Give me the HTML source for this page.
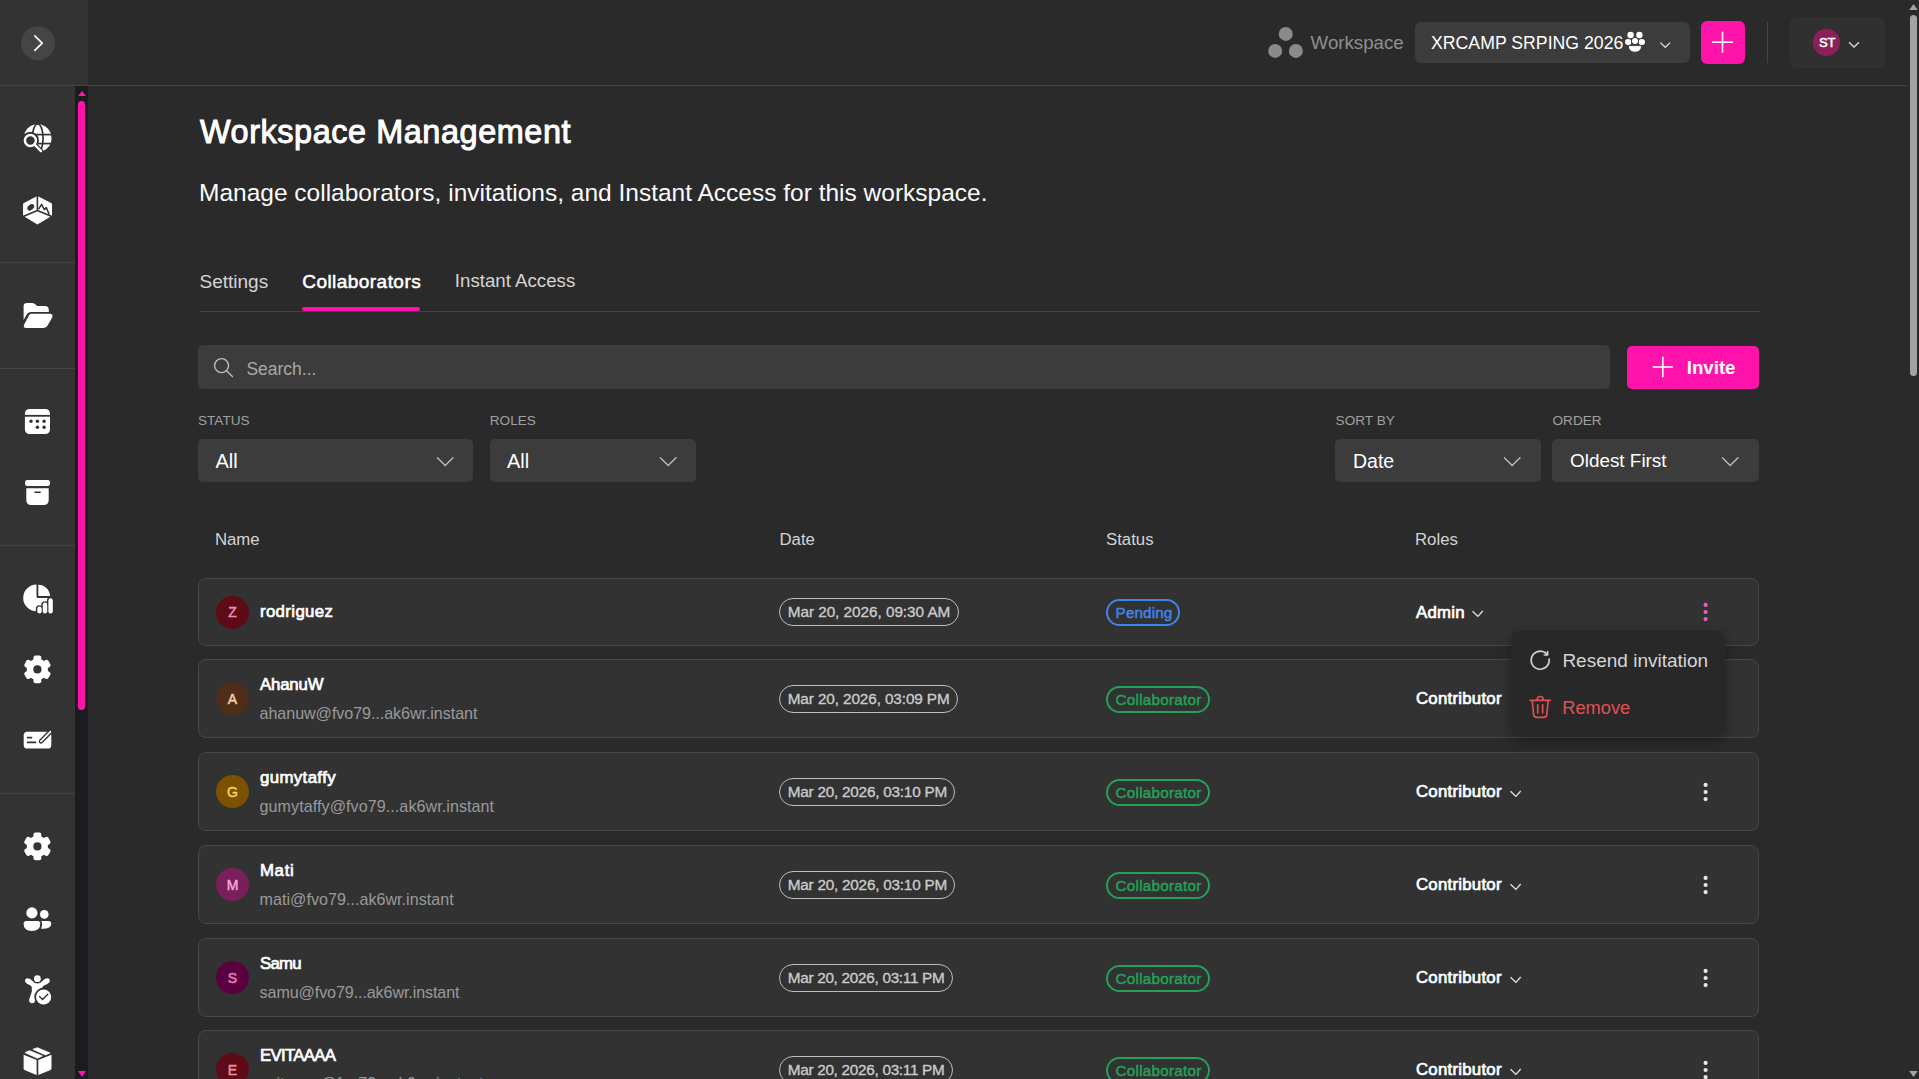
<!DOCTYPE html>
<html><head><meta charset="utf-8"><title>Workspace Management</title>
<style>
html,body{margin:0;padding:0}
body{width:1919px;height:1079px;overflow:hidden;background:#2a2a2a;font-family:"Liberation Sans",sans-serif;position:relative}
.a{position:absolute}
.t{position:absolute;white-space:nowrap;line-height:1}
svg.a{overflow:visible}
</style></head><body>
<div class="a" style="left:0px;top:0px;width:88px;height:85px;background:#333333;"></div>
<div class="a" style="left:0px;top:85px;width:1907px;height:1px;background:#444444;"></div>
<div class="a" style="left:0px;top:86px;width:75px;height:993px;background:#333333;"></div>
<div class="a" style="left:75px;top:86px;width:13px;height:993px;background:#1b1c20;"></div>
<div class="a" style="left:0px;top:262px;width:75px;height:1px;background:#444444;"></div>
<div class="a" style="left:0px;top:368px;width:75px;height:1px;background:#444444;"></div>
<div class="a" style="left:0px;top:545px;width:75px;height:1px;background:#444444;"></div>
<div class="a" style="left:0px;top:793px;width:75px;height:1px;background:#444444;"></div>
<div class="a" style="left:78px;top:101px;width:7px;height:609px;background:#ff14ab;border-radius:3.5px"></div>
<svg class="a" style="left:75px;top:86px;" width="13" height="993" viewBox="0 0 13 993"><polygon points="3,10 7,5 11,10" fill="#ff14ab"/><polygon points="3,985 11,985 7,991" fill="#ff14ab"/></svg>
<svg class="a" style="left:1907px;top:0px;" width="12" height="1079" viewBox="0 0 12 1079"><polygon points="2.2,10 6.5,4 10.8,10" fill="#a3a3a3"/><rect x="3" y="15" width="7" height="361" rx="3.5" fill="#a3a3a3"/><polygon points="2.2,1071 10.8,1071 6.5,1077" fill="#a3a3a3"/></svg>
<svg class="a" style="left:0px;top:0px;" width="88" height="85" viewBox="0 0 88 85"><circle cx="38.1" cy="43.3" r="17" fill="#454545"/><polyline points="34.8,35.8 42.2,43.2 34.8,50.4" fill="none" stroke="#fff" stroke-width="1.7" stroke-linecap="round" stroke-linejoin="round"/></svg>
<svg class="a" style="left:18px;top:118px;" width="40" height="40" viewBox="0 0 40 40"><circle cx="19.6" cy="20.2" r="13.9" fill="#ffffff"/><line x1="4" y1="16.6" x2="36" y2="16.6" stroke="#333333" stroke-width="1.7"/><line x1="4" y1="25.6" x2="36" y2="25.6" stroke="#333333" stroke-width="1.7"/><ellipse cx="19.7" cy="20.2" rx="5.4" ry="14.2" fill="none" stroke="#333333" stroke-width="1.7"/><polygon points="0,26 17.4,26 24.5,33.6 24.5,40 0,40" fill="#333333"/><circle cx="12.4" cy="22.4" r="8.6" fill="#333333"/><line x1="17.4" y1="27.4" x2="23.2" y2="33.4" stroke="#333333" stroke-width="5" stroke-linecap="round"/><circle cx="12.4" cy="22.4" r="5.5" fill="none" stroke="#ffffff" stroke-width="2.5"/><line x1="16.8" y1="26.8" x2="23" y2="33.2" stroke="#ffffff" stroke-width="2.4" stroke-linecap="round"/></svg>
<svg class="a" style="left:18px;top:190px;" width="40" height="40" viewBox="0 0 40 40"><polygon points="19.4,6.5 33.5,13.7 33.5,25.6 19.4,34 5.6,25.6 5.6,13.7" fill="#ffffff" stroke="#ffffff" stroke-width="1" stroke-linejoin="round"/><polyline points="19.4,5 19.4,20.4 4,27" fill="none" stroke="#333333" stroke-width="1.6"/><line x1="19.4" y1="20.4" x2="35" y2="27" stroke="#333333" stroke-width="1.6"/><ellipse cx="12.8" cy="17.3" rx="3.9" ry="2.6" transform="rotate(-40 12.8 17.3)" fill="#333333"/><polyline points="20.6,19.2 23.6,14.3 26.3,19.6 28.3,17.6 31.3,24.6" fill="none" stroke="#333333" stroke-width="1.5" stroke-linejoin="round"/></svg>
<svg class="a" style="left:18px;top:296px;" width="40" height="40" viewBox="0 0 40 40"><path d="M5.6,10.2 Q5.6,6.9 9,6.9 H14.2 Q16.3,6.9 17.6,8.4 L19,10 H27 Q30.8,10 30.8,14 V15.9 H13.2 Q10,15.9 8.4,18.9 L5.6,24 Z" fill="#ffffff"/><path d="M13.4,17.8 H31.6 Q35.6,17.9 34.2,21.6 L29.6,29.6 Q28.3,31.9 25.6,31.9 H8.6 Q4.6,31.9 6.2,28.4 L10.6,20 Q11.7,17.8 13.4,17.8 Z" fill="#ffffff"/></svg>
<svg class="a" style="left:18px;top:401px;" width="40" height="40" viewBox="0 0 40 40"><rect x="6.9" y="8" width="25.1" height="25" rx="4.6" fill="#ffffff"/><rect x="6" y="13.9" width="27" height="1.8" fill="#333333"/><circle cx="13" cy="20.2" r="1.7" fill="#333333"/><circle cx="19.4" cy="20.2" r="1.7" fill="#333333"/><circle cx="26.1" cy="20.2" r="1.7" fill="#333333"/><circle cx="19.4" cy="26.3" r="1.7" fill="#333333"/><circle cx="26.1" cy="26.3" r="1.7" fill="#333333"/></svg>
<svg class="a" style="left:18px;top:472px;" width="40" height="40" viewBox="0 0 40 40"><rect x="7" y="8" width="25" height="6.1" rx="2.4" fill="#ffffff"/><path d="M8.3,16.3 H30.7 V28 Q30.7,33 25.7,33 H13.3 Q8.3,33 8.3,28 Z" fill="#ffffff"/><line x1="17" y1="20.2" x2="22.1" y2="20.2" stroke="#333333" stroke-width="1.6" stroke-linecap="round"/></svg>
<svg class="a" style="left:18px;top:578px;" width="40" height="40" viewBox="0 0 40 40"><path d="M18.5,6.6 A13.3,13.3 0 1 0 31.8,19.9 H20 Q18.5,19.9 18.5,18.4 Z" fill="#ffffff"/><path d="M20.3,6.7 A11.8,11.8 0 0 1 32,18.1 H20.3 Z" fill="#ffffff"/><rect x="17.8" y="27.2" width="7.4" height="9.6" rx="3.7" fill="#333333"/><rect x="23.3" y="23.3" width="7.4" height="13.499999999999998" rx="3.7" fill="#333333"/><rect x="28.9" y="18.9" width="7.4" height="17.900000000000002" rx="3.7" fill="#333333"/><rect x="19.3" y="28.5" width="4.4" height="7.0" rx="2.2" fill="#ffffff"/><rect x="24.8" y="24.6" width="4.4" height="10.899999999999999" rx="2.2" fill="#ffffff"/><rect x="30.4" y="20.2" width="4.4" height="15.3" rx="2.2" fill="#ffffff"/></svg>
<svg class="a" style="left:18px;top:649px;" width="40" height="40" viewBox="0 0 40 40"><circle cx="19.4" cy="20.4" r="10.6" fill="#ffffff"/><rect x="15.499999999999998" y="6.599999999999998" width="7.8" height="7" rx="2" fill="#ffffff" transform="rotate(0 19.4 20.4)"/><rect x="15.499999999999998" y="6.599999999999998" width="7.8" height="7" rx="2" fill="#ffffff" transform="rotate(60 19.4 20.4)"/><rect x="15.499999999999998" y="6.599999999999998" width="7.8" height="7" rx="2" fill="#ffffff" transform="rotate(120 19.4 20.4)"/><rect x="15.499999999999998" y="6.599999999999998" width="7.8" height="7" rx="2" fill="#ffffff" transform="rotate(180 19.4 20.4)"/><rect x="15.499999999999998" y="6.599999999999998" width="7.8" height="7" rx="2" fill="#ffffff" transform="rotate(240 19.4 20.4)"/><rect x="15.499999999999998" y="6.599999999999998" width="7.8" height="7" rx="2" fill="#ffffff" transform="rotate(300 19.4 20.4)"/><circle cx="19.4" cy="20.4" r="4.1" fill="#333333"/></svg>
<svg class="a" style="left:18px;top:720px;" width="40" height="40" viewBox="0 0 40 40"><rect x="5.7" y="11.7" width="27.6" height="16.8" rx="3.6" fill="#ffffff"/><line x1="9.6" y1="17.6" x2="13.4" y2="17.6" stroke="#333333" stroke-width="1.7" stroke-linecap="round"/><line x1="9.6" y1="22.4" x2="17.5" y2="22.4" stroke="#333333" stroke-width="1.7" stroke-linecap="round"/><line x1="23" y1="21.3" x2="32.3" y2="11.8" stroke="#333333" stroke-width="4.6" stroke-linecap="round"/><line x1="23" y1="21.3" x2="32.3" y2="11.8" stroke="#ffffff" stroke-width="1.9" stroke-linecap="round"/></svg>
<svg class="a" style="left:18px;top:826px;" width="40" height="40" viewBox="0 0 40 40"><circle cx="19.4" cy="20.4" r="10.6" fill="#ffffff"/><rect x="15.499999999999998" y="6.599999999999998" width="7.8" height="7" rx="2" fill="#ffffff" transform="rotate(0 19.4 20.4)"/><rect x="15.499999999999998" y="6.599999999999998" width="7.8" height="7" rx="2" fill="#ffffff" transform="rotate(60 19.4 20.4)"/><rect x="15.499999999999998" y="6.599999999999998" width="7.8" height="7" rx="2" fill="#ffffff" transform="rotate(120 19.4 20.4)"/><rect x="15.499999999999998" y="6.599999999999998" width="7.8" height="7" rx="2" fill="#ffffff" transform="rotate(180 19.4 20.4)"/><rect x="15.499999999999998" y="6.599999999999998" width="7.8" height="7" rx="2" fill="#ffffff" transform="rotate(240 19.4 20.4)"/><rect x="15.499999999999998" y="6.599999999999998" width="7.8" height="7" rx="2" fill="#ffffff" transform="rotate(300 19.4 20.4)"/><circle cx="19.4" cy="20.4" r="4.1" fill="#333333"/></svg>
<svg class="a" style="left:18px;top:899px;" width="40" height="40" viewBox="0 0 40 40"><circle cx="13.9" cy="13.9" r="5.6" fill="#ffffff"/><circle cx="26.3" cy="15.4" r="4.3" fill="#ffffff"/><path d="M8.4,21.9 H19.6 Q22.3,21.9 22.3,24.6 Q22.3,32 13.9,32 Q5.6,32 5.6,24.6 Q5.6,21.9 8.4,21.9 Z" fill="#ffffff"/><path d="M22.8,21.9 H30.6 Q33.3,21.9 33.3,24.8 Q33.3,29.8 24.5,29.8 H23 Q24.2,27.5 24.2,25 Q24.2,23 22.8,21.9 Z" fill="#ffffff"/></svg>
<svg class="a" style="left:18px;top:970px;" width="40" height="40" viewBox="0 0 40 40"><circle cx="19.4" cy="8.7" r="3.4" fill="#ffffff"/><path d="M9.5,8.2 Q12.5,8.2 14.5,11 Q16.5,13.5 19.4,13.5 Q22.3,13.5 24.3,11 Q26.3,8.2 29.3,8.2 Q32.2,8.5 31.8,11.3 Q31.2,13.6 27,15 Q24.8,15.9 24.3,17.5 Q18.5,19.5 17,26 L17.2,30.2 Q16.8,33.3 13.8,33.2 Q10.5,32.8 11.2,29.5 L13.8,21.8 L13.8,17.3 Q13.5,15.8 11.8,15 Q7.5,13.5 7,11.3 Q6.8,8.5 9.5,8.2 Z" fill="#ffffff"/><circle cx="25.6" cy="27" r="9.3" fill="#333333"/><circle cx="25.6" cy="27" r="7.6" fill="#ffffff"/><polyline points="21.5,26.5 24.5,29.5 29.8,24.2" fill="none" stroke="#333333" stroke-width="1.4" stroke-linecap="round" stroke-linejoin="round"/></svg>
<svg class="a" style="left:18px;top:1039px;" width="40" height="40" viewBox="0 0 40 40"><path d="M5.6,15.8 L18.6,20.9 V36 L7,31.2 Q5.6,30.6 5.6,29.2 Z" fill="#ffffff"/><path d="M20.3,20.9 L33.5,15.8 V29.2 Q33.5,30.6 32,31.2 L20.3,36 Z" fill="#ffffff"/><polygon points="7,13.6 11.6,11.7 24.3,17 19.4,19.2" fill="#ffffff" stroke="#ffffff" stroke-width="0.8" stroke-linejoin="round"/><polygon points="14.9,10.3 19.4,8.7 32,14 27.4,15.9" fill="#ffffff" stroke="#ffffff" stroke-width="0.8" stroke-linejoin="round"/></svg>
<svg class="a" style="left:1260px;top:20px;" width="50" height="45" viewBox="0 0 50 45"><circle cx="25.75" cy="13.9" r="7" fill="#8a8a8a"/><circle cx="15.2" cy="30.9" r="7" fill="#8a8a8a"/><circle cx="35.9" cy="30.9" r="7" fill="#8a8a8a"/></svg>
<div class="t" style="left:1310.60px;top:34.17px;font-size:18.7px;color:#8f8f8f;font-weight:400;">Workspace</div>
<div class="a" style="left:1415px;top:22px;width:275px;height:41px;background:#3c3c3c;border-radius:6px"></div>
<div class="t" style="left:1431.00px;top:34.82px;font-size:17.7px;color:#ffffff;font-weight:400;">XRCAMP SRPING 2026</div>
<svg class="a" style="left:1620px;top:25px;" width="60" height="35" viewBox="0 0 60 35"><circle cx="10.6" cy="10" r="3.2" fill="#fff"/><circle cx="19.4" cy="10" r="3.2" fill="#fff"/><ellipse cx="8.2" cy="17" rx="3.2" ry="2.9" fill="#fff"/><ellipse cx="21.8" cy="17" rx="3.2" ry="2.9" fill="#fff"/><circle cx="15" cy="16.1" r="3.9" fill="#3c3c3c"/><circle cx="15" cy="16.1" r="3.0" fill="#fff"/><path d="M8.4,20.6 H21.6 Q21.6,27.2 15,27.2 Q8.4,27.2 8.4,20.6 Z" fill="#fff" stroke="#3c3c3c" stroke-width="0.9"/><polyline points="40.4,17.6 45.3,22.3 50.2,17.6" fill="none" stroke="#dddddd" stroke-width="1.3"/></svg>
<div class="a" style="left:1701px;top:21px;width:44px;height:43px;background:#ff14ab;border-radius:6px"></div>
<svg class="a" style="left:1701px;top:21px;" width="44" height="43" viewBox="0 0 44 43"><line x1="11" y1="21.2" x2="32" y2="21.2" stroke="#fff" stroke-width="1.6"/><line x1="21.5" y1="10.6" x2="21.5" y2="31.6" stroke="#fff" stroke-width="1.6"/></svg>
<div class="a" style="left:1767px;top:22px;width:1px;height:41px;background:#444444;"></div>
<div class="a" style="left:1790px;top:17px;width:95px;height:51px;background:#303030;border-radius:7px"></div>
<svg class="a" style="left:1790px;top:17px;" width="95" height="51" viewBox="0 0 95 51"><circle cx="36.4" cy="25.4" r="13.6" fill="#8a1f5a"/><polyline points="59,25.2 64,30 69,25.2" fill="none" stroke="#dddddd" stroke-width="1.3"/></svg>
<div class="t" style="left:1818.88px;top:36.40px;font-size:13px;color:#ffffff;font-weight:400;-webkit-text-stroke:0.55px #ffffff;">ST</div>
<div class="t" style="left:200.00px;top:116.17px;font-size:32.4px;color:#ffffff;font-weight:400;-webkit-text-stroke:1.0px #ffffff;letter-spacing:0.58px;">Workspace Management</div>
<div class="t" style="left:199.00px;top:180.86px;font-size:24.5px;color:#fafafa;font-weight:400;">Manage collaborators, invitations, and Instant Access for this workspace.</div>
<div class="t" style="left:199.50px;top:271.72px;font-size:19px;color:#d5d5d5;font-weight:400;">Settings</div>
<div class="t" style="left:302.27px;top:271.72px;font-size:19px;color:#ffffff;font-weight:400;-webkit-text-stroke:0.55px #ffffff;letter-spacing:0.45px;">Collaborators</div>
<div class="t" style="left:454.80px;top:271.97px;font-size:18.7px;color:#d5d5d5;font-weight:400;">Instant Access</div>
<div class="a" style="left:200px;top:311px;width:1560px;height:1px;background:#444444;"></div>
<div class="a" style="left:302px;top:307px;width:118px;height:4px;background:#ff14ab;border-radius:2px"></div>
<div class="a" style="left:198px;top:345px;width:1412px;height:44px;background:#3c3c3c;border-radius:5px"></div>
<svg class="a" style="left:205px;top:350px;" width="40" height="35" viewBox="0 0 40 35"><circle cx="16.55" cy="15.6" r="7.0" fill="none" stroke="#bdbdbd" stroke-width="1.4"/><line x1="21.6" y1="20.7" x2="27.4" y2="26.6" stroke="#bdbdbd" stroke-width="1.4" stroke-linecap="round"/></svg>
<div class="t" style="left:246.40px;top:360.59px;font-size:17.5px;color:#a8a8a8;font-weight:400;">Search...</div>
<div class="a" style="left:1627px;top:346px;width:132px;height:43px;background:#ff14ab;border-radius:5px"></div>
<svg class="a" style="left:1627px;top:346px;" width="132" height="43" viewBox="0 0 132 43"><line x1="25.7" y1="21" x2="45.8" y2="21" stroke="#fff" stroke-width="1.6"/><line x1="35.8" y1="10.8" x2="35.8" y2="31.2" stroke="#fff" stroke-width="1.6"/></svg>
<div class="t" style="left:1686.70px;top:358.97px;font-size:18.7px;color:#ffffff;font-weight:700;">Invite</div>
<div class="t" style="left:198.00px;top:413.79px;font-size:13.6px;color:#a0a0a0;font-weight:400;">STATUS</div>
<div class="t" style="left:489.80px;top:413.79px;font-size:13.6px;color:#a0a0a0;font-weight:400;">ROLES</div>
<div class="t" style="left:1335.60px;top:413.79px;font-size:13.6px;color:#a0a0a0;font-weight:400;">SORT BY</div>
<div class="t" style="left:1552.50px;top:413.79px;font-size:13.6px;color:#a0a0a0;font-weight:400;">ORDER</div>
<div class="a" style="left:198px;top:439px;width:275px;height:43px;background:#3c3c3c;border-radius:5px"></div>
<div class="t" style="left:215.50px;top:451.27px;font-size:20px;color:#ffffff;font-weight:400;">All</div>
<svg class="a" style="left:434.5px;top:452px;" width="21" height="18" viewBox="0 0 21 18"><polyline points="2.4,5.7 10.2,13.5 18,5.7" fill="none" stroke="#bdbdbd" stroke-width="1.35" stroke-linecap="round"/></svg>
<div class="a" style="left:490px;top:439px;width:206px;height:43px;background:#3c3c3c;border-radius:5px"></div>
<div class="t" style="left:507.00px;top:451.27px;font-size:20px;color:#ffffff;font-weight:400;">All</div>
<svg class="a" style="left:657.6px;top:452px;" width="21" height="18" viewBox="0 0 21 18"><polyline points="2.4,5.7 10.2,13.5 18,5.7" fill="none" stroke="#bdbdbd" stroke-width="1.35" stroke-linecap="round"/></svg>
<div class="a" style="left:1335px;top:439px;width:206px;height:43px;background:#3c3c3c;border-radius:5px"></div>
<div class="t" style="left:1353.00px;top:451.69px;font-size:19.5px;color:#ffffff;font-weight:400;">Date</div>
<svg class="a" style="left:1502px;top:452px;" width="21" height="18" viewBox="0 0 21 18"><polyline points="2.4,5.7 10.2,13.5 18,5.7" fill="none" stroke="#bdbdbd" stroke-width="1.35" stroke-linecap="round"/></svg>
<div class="a" style="left:1552px;top:439px;width:207px;height:43px;background:#3c3c3c;border-radius:5px"></div>
<div class="t" style="left:1570.00px;top:452.20px;font-size:18.9px;color:#ffffff;font-weight:400;">Oldest First</div>
<svg class="a" style="left:1719.5px;top:452px;" width="21" height="18" viewBox="0 0 21 18"><polyline points="2.4,5.7 10.2,13.5 18,5.7" fill="none" stroke="#bdbdbd" stroke-width="1.35" stroke-linecap="round"/></svg>
<div class="t" style="left:214.90px;top:531.78px;font-size:16.8px;color:#d4d4d4;font-weight:400;">Name</div>
<div class="t" style="left:779.50px;top:531.78px;font-size:16.8px;color:#d4d4d4;font-weight:400;">Date</div>
<div class="t" style="left:1106.00px;top:531.78px;font-size:16.8px;color:#d4d4d4;font-weight:400;">Status</div>
<div class="t" style="left:1415.00px;top:531.78px;font-size:16.8px;color:#d4d4d4;font-weight:400;">Roles</div>
<div class="a" style="left:198px;top:578px;width:1561px;height:68px;background:#323232;box-sizing:border-box;border:1px solid #474747;border-radius:8px"></div>
<div class="a" style="left:216px;top:595.8px;width:33px;height:33px;border-radius:50%;background:#5e0a17"></div>
<div class="t" style="left:216px;width:33px;text-align:center;top:605.45px;font-size:14px;color:#f08cb0;-webkit-text-stroke:0.5px #f08cb0">Z</div>
<div class="t" style="left:259.95px;top:604.08px;font-size:16.8px;color:#ffffff;font-weight:400;-webkit-text-stroke:0.7px #ffffff;letter-spacing:0.38px;">rodriguez</div>
<div class="a" style="left:779px;top:598.0px;width:180px;height:28px;box-sizing:border-box;border:1.3px solid #bdbdbd;border-radius:14px;padding:0 7.7px;"><div style="font-size:15.3px;line-height:1;font-weight:400;-webkit-text-stroke:0.35px #cbcbcb;color:#cbcbcb;white-space:nowrap;letter-spacing:-0.03px;margin-top:5.35px">Mar 20, 2026, 09:30 AM</div></div>
<div class="a" style="left:1106px;top:599.0px;width:74px;height:27px;box-sizing:border-box;border:2px solid #3f86ea;border-radius:14px;"></div>
<div class="t" style="left:1115.62px;top:605.03px;font-size:15.2px;color:#3f86ea;font-weight:400;-webkit-text-stroke:0.45px #3f86ea;letter-spacing:0.15px;">Pending</div>
<div class="t" style="left:1415.95px;top:604.58px;font-size:16.8px;color:#ffffff;font-weight:400;-webkit-text-stroke:0.7px #ffffff;letter-spacing:0.27px;">Admin</div>
<svg class="a" style="left:1471.4px;top:607.0px;" width="15" height="12" viewBox="0 0 15 12"><polyline points="1.5,4.2 6.9,9.4 11.7,4" fill="none" stroke="#e6e6e6" stroke-width="1.3"/></svg>
<svg class="a" style="left:1699px;top:600.0px;" width="14" height="26" viewBox="0 0 14 26"><circle cx="6.6" cy="4.9" r="2.1" fill="#e85fbf"/><circle cx="6.6" cy="12" r="2.1" fill="#e85fbf"/><circle cx="6.6" cy="19.1" r="2.1" fill="#e85fbf"/></svg>
<div class="a" style="left:198px;top:659px;width:1561px;height:79px;background:#323232;box-sizing:border-box;border:1px solid #474747;border-radius:8px"></div>
<div class="a" style="left:216px;top:682.3px;width:33px;height:33px;border-radius:50%;background:#4e2e18"></div>
<div class="t" style="left:216px;width:33px;text-align:center;top:691.95px;font-size:14px;color:#f5d0a0;-webkit-text-stroke:0.5px #f5d0a0">A</div>
<div class="t" style="left:259.95px;top:676.98px;font-size:16.8px;color:#ffffff;font-weight:400;-webkit-text-stroke:0.7px #ffffff;letter-spacing:-0.15px;">AhanuW</div>
<div class="t" style="left:259.60px;top:705.37px;font-size:16.1px;color:#9a9a9a;font-weight:400;letter-spacing:-0.06px;">ahanuw@fvo79...ak6wr.instant</div>
<div class="a" style="left:779px;top:685.0px;width:178.5px;height:28px;box-sizing:border-box;border:1.3px solid #bdbdbd;border-radius:14px;padding:0 7.7px;"><div style="font-size:15.3px;line-height:1;font-weight:400;-webkit-text-stroke:0.35px #cbcbcb;color:#cbcbcb;white-space:nowrap;letter-spacing:-0.1px;margin-top:5.35px">Mar 20, 2026, 03:09 PM</div></div>
<div class="a" style="left:1106px;top:686.0px;width:104px;height:27px;box-sizing:border-box;border:2px solid #23a257;border-radius:14px;"></div>
<div class="t" style="left:1115.62px;top:692.03px;font-size:15.2px;color:#23a257;font-weight:400;-webkit-text-stroke:0.45px #23a257;letter-spacing:0.27px;">Collaborator</div>
<div class="t" style="left:1415.95px;top:691.08px;font-size:16.8px;color:#ffffff;font-weight:400;-webkit-text-stroke:0.7px #ffffff;letter-spacing:0.26px;">Contributor</div>
<svg class="a" style="left:1699px;top:686.5px;" width="14" height="26" viewBox="0 0 14 26"><circle cx="6.6" cy="4.9" r="2.1" fill="#e6e6e6"/><circle cx="6.6" cy="12" r="2.1" fill="#e6e6e6"/><circle cx="6.6" cy="19.1" r="2.1" fill="#e6e6e6"/></svg>
<div class="a" style="left:198px;top:752px;width:1561px;height:79px;background:#323232;box-sizing:border-box;border:1px solid #474747;border-radius:8px"></div>
<div class="a" style="left:216px;top:775.3px;width:33px;height:33px;border-radius:50%;background:#7a5200"></div>
<div class="t" style="left:216px;width:33px;text-align:center;top:784.95px;font-size:14px;color:#f7cf5a;-webkit-text-stroke:0.5px #f7cf5a">G</div>
<div class="t" style="left:259.95px;top:769.98px;font-size:16.8px;color:#ffffff;font-weight:400;-webkit-text-stroke:0.7px #ffffff;letter-spacing:0.4px;">gumytaffy</div>
<div class="t" style="left:259.60px;top:798.37px;font-size:16.1px;color:#9a9a9a;font-weight:400;letter-spacing:0.065px;">gumytaffy@fvo79...ak6wr.instant</div>
<div class="a" style="left:779px;top:778.0px;width:176px;height:28px;box-sizing:border-box;border:1.3px solid #bdbdbd;border-radius:14px;padding:0 7.7px;"><div style="font-size:15.3px;line-height:1;font-weight:400;-webkit-text-stroke:0.35px #cbcbcb;color:#cbcbcb;white-space:nowrap;letter-spacing:-0.22px;margin-top:5.35px">Mar 20, 2026, 03:10 PM</div></div>
<div class="a" style="left:1106px;top:779.0px;width:104px;height:27px;box-sizing:border-box;border:2px solid #23a257;border-radius:14px;"></div>
<div class="t" style="left:1115.62px;top:785.03px;font-size:15.2px;color:#23a257;font-weight:400;-webkit-text-stroke:0.45px #23a257;letter-spacing:0.27px;">Collaborator</div>
<div class="t" style="left:1415.95px;top:784.08px;font-size:16.8px;color:#ffffff;font-weight:400;-webkit-text-stroke:0.7px #ffffff;letter-spacing:0.26px;">Contributor</div>
<svg class="a" style="left:1509px;top:786.5px;" width="15" height="12" viewBox="0 0 15 12"><polyline points="1.5,4.2 6.9,9.4 11.7,4" fill="none" stroke="#e6e6e6" stroke-width="1.3"/></svg>
<svg class="a" style="left:1699px;top:779.5px;" width="14" height="26" viewBox="0 0 14 26"><circle cx="6.6" cy="4.9" r="2.1" fill="#e6e6e6"/><circle cx="6.6" cy="12" r="2.1" fill="#e6e6e6"/><circle cx="6.6" cy="19.1" r="2.1" fill="#e6e6e6"/></svg>
<div class="a" style="left:198px;top:845px;width:1561px;height:79px;background:#323232;box-sizing:border-box;border:1px solid #474747;border-radius:8px"></div>
<div class="a" style="left:216px;top:868.3px;width:33px;height:33px;border-radius:50%;background:#7a1f5e"></div>
<div class="t" style="left:216px;width:33px;text-align:center;top:877.95px;font-size:14px;color:#f4a6d8;-webkit-text-stroke:0.5px #f4a6d8">M</div>
<div class="t" style="left:259.95px;top:862.98px;font-size:16.8px;color:#ffffff;font-weight:400;-webkit-text-stroke:0.7px #ffffff;letter-spacing:0.7px;">Mati</div>
<div class="t" style="left:259.60px;top:891.37px;font-size:16.1px;color:#9a9a9a;font-weight:400;letter-spacing:0.025px;">mati@fvo79...ak6wr.instant</div>
<div class="a" style="left:779px;top:871.0px;width:176px;height:28px;box-sizing:border-box;border:1.3px solid #bdbdbd;border-radius:14px;padding:0 7.7px;"><div style="font-size:15.3px;line-height:1;font-weight:400;-webkit-text-stroke:0.35px #cbcbcb;color:#cbcbcb;white-space:nowrap;letter-spacing:-0.22px;margin-top:5.35px">Mar 20, 2026, 03:10 PM</div></div>
<div class="a" style="left:1106px;top:872.0px;width:104px;height:27px;box-sizing:border-box;border:2px solid #23a257;border-radius:14px;"></div>
<div class="t" style="left:1115.62px;top:878.03px;font-size:15.2px;color:#23a257;font-weight:400;-webkit-text-stroke:0.45px #23a257;letter-spacing:0.27px;">Collaborator</div>
<div class="t" style="left:1415.95px;top:877.08px;font-size:16.8px;color:#ffffff;font-weight:400;-webkit-text-stroke:0.7px #ffffff;letter-spacing:0.26px;">Contributor</div>
<svg class="a" style="left:1509px;top:879.5px;" width="15" height="12" viewBox="0 0 15 12"><polyline points="1.5,4.2 6.9,9.4 11.7,4" fill="none" stroke="#e6e6e6" stroke-width="1.3"/></svg>
<svg class="a" style="left:1699px;top:872.5px;" width="14" height="26" viewBox="0 0 14 26"><circle cx="6.6" cy="4.9" r="2.1" fill="#e6e6e6"/><circle cx="6.6" cy="12" r="2.1" fill="#e6e6e6"/><circle cx="6.6" cy="19.1" r="2.1" fill="#e6e6e6"/></svg>
<div class="a" style="left:198px;top:938px;width:1561px;height:79px;background:#323232;box-sizing:border-box;border:1px solid #474747;border-radius:8px"></div>
<div class="a" style="left:216px;top:961.3px;width:33px;height:33px;border-radius:50%;background:#5a0040"></div>
<div class="t" style="left:216px;width:33px;text-align:center;top:970.95px;font-size:14px;color:#e77bbf;-webkit-text-stroke:0.5px #e77bbf">S</div>
<div class="t" style="left:259.95px;top:955.98px;font-size:16.8px;color:#ffffff;font-weight:400;-webkit-text-stroke:0.7px #ffffff;letter-spacing:-0.7px;">Samu</div>
<div class="t" style="left:259.60px;top:984.37px;font-size:16.1px;color:#9a9a9a;font-weight:400;letter-spacing:-0.1px;">samu@fvo79...ak6wr.instant</div>
<div class="a" style="left:779px;top:964.0px;width:173.5px;height:28px;box-sizing:border-box;border:1.3px solid #bdbdbd;border-radius:14px;padding:0 7.7px;"><div style="font-size:15.3px;line-height:1;font-weight:400;-webkit-text-stroke:0.35px #cbcbcb;color:#cbcbcb;white-space:nowrap;letter-spacing:-0.28px;margin-top:5.35px">Mar 20, 2026, 03:11 PM</div></div>
<div class="a" style="left:1106px;top:965.0px;width:104px;height:27px;box-sizing:border-box;border:2px solid #23a257;border-radius:14px;"></div>
<div class="t" style="left:1115.62px;top:971.03px;font-size:15.2px;color:#23a257;font-weight:400;-webkit-text-stroke:0.45px #23a257;letter-spacing:0.27px;">Collaborator</div>
<div class="t" style="left:1415.95px;top:970.08px;font-size:16.8px;color:#ffffff;font-weight:400;-webkit-text-stroke:0.7px #ffffff;letter-spacing:0.26px;">Contributor</div>
<svg class="a" style="left:1509px;top:972.5px;" width="15" height="12" viewBox="0 0 15 12"><polyline points="1.5,4.2 6.9,9.4 11.7,4" fill="none" stroke="#e6e6e6" stroke-width="1.3"/></svg>
<svg class="a" style="left:1699px;top:965.5px;" width="14" height="26" viewBox="0 0 14 26"><circle cx="6.6" cy="4.9" r="2.1" fill="#e6e6e6"/><circle cx="6.6" cy="12" r="2.1" fill="#e6e6e6"/><circle cx="6.6" cy="19.1" r="2.1" fill="#e6e6e6"/></svg>
<div class="a" style="left:198px;top:1030px;width:1561px;height:79px;background:#323232;box-sizing:border-box;border:1px solid #474747;border-radius:8px"></div>
<div class="a" style="left:216px;top:1053.3px;width:33px;height:33px;border-radius:50%;background:#5e0a17"></div>
<div class="t" style="left:216px;width:33px;text-align:center;top:1062.95px;font-size:14px;color:#f08c9c;-webkit-text-stroke:0.5px #f08c9c">E</div>
<div class="t" style="left:259.95px;top:1047.98px;font-size:16.8px;color:#ffffff;font-weight:400;-webkit-text-stroke:0.7px #ffffff;letter-spacing:-0.7px;">EVITAAAA</div>
<div class="t" style="left:259.60px;top:1074.87px;font-size:16.1px;color:#9a9a9a;font-weight:400;">evitaaaa@fvo79...ak6wr.instant</div>
<div class="a" style="left:779px;top:1056.0px;width:173.5px;height:28px;box-sizing:border-box;border:1.3px solid #bdbdbd;border-radius:14px;padding:0 7.7px;"><div style="font-size:15.3px;line-height:1;font-weight:400;-webkit-text-stroke:0.35px #cbcbcb;color:#cbcbcb;white-space:nowrap;letter-spacing:-0.28px;margin-top:5.35px">Mar 20, 2026, 03:11 PM</div></div>
<div class="a" style="left:1106px;top:1057.0px;width:104px;height:27px;box-sizing:border-box;border:2px solid #23a257;border-radius:14px;"></div>
<div class="t" style="left:1115.62px;top:1063.03px;font-size:15.2px;color:#23a257;font-weight:400;-webkit-text-stroke:0.45px #23a257;letter-spacing:0.27px;">Collaborator</div>
<div class="t" style="left:1415.95px;top:1062.08px;font-size:16.8px;color:#ffffff;font-weight:400;-webkit-text-stroke:0.7px #ffffff;letter-spacing:0.26px;">Contributor</div>
<svg class="a" style="left:1509px;top:1064.5px;" width="15" height="12" viewBox="0 0 15 12"><polyline points="1.5,4.2 6.9,9.4 11.7,4" fill="none" stroke="#e6e6e6" stroke-width="1.3"/></svg>
<svg class="a" style="left:1699px;top:1057.5px;" width="14" height="26" viewBox="0 0 14 26"><circle cx="6.6" cy="4.9" r="2.1" fill="#e6e6e6"/><circle cx="6.6" cy="12" r="2.1" fill="#e6e6e6"/><circle cx="6.6" cy="19.1" r="2.1" fill="#e6e6e6"/></svg>
<div class="a" style="left:1511px;top:631px;width:214px;height:104px;background:#282828;border-radius:7px;box-shadow:0 4px 14px rgba(0,0,0,0.35)"></div>
<svg class="a" style="left:1527px;top:646.8px;" width="26.4" height="26.4" viewBox="0 0 26.4 26.4"><path transform="scale(1.1)" fill="#d0d0d0" d="M12 4.5a7.5 7.5 0 1 0 7.43 6.5.75.75 0 0 1 1.49-.2A9 9 0 1 1 18 5.29V4.25a.75.75 0 0 1 1.5 0v3a.75.75 0 0 1-.75.75h-3a.75.75 0 0 1 0-1.5h1.35a7.47 7.47 0 0 0-5.1-2Z"/></svg>
<svg class="a" style="left:1526.6px;top:693.7px;" width="26.4" height="26.4" viewBox="0 0 26.4 26.4"><path transform="scale(1.1)" fill="#e05252" d="M10 5h4a2 2 0 1 0-4 0ZM8.5 5a3.5 3.5 0 1 1 7 0h5.75a.75.75 0 0 1 0 1.5h-1.32l-1.17 12.11A3.75 3.75 0 0 1 15.03 22H8.97a3.75 3.75 0 0 1-3.73-3.39L4.07 6.5H2.75a.75.75 0 0 1 0-1.5H8.5Zm2 4.75a.75.75 0 0 0-1.5 0v7.5a.75.75 0 0 0 1.5 0v-7.5ZM14.25 9a.75.75 0 0 1 .75.75v7.5a.75.75 0 0 1-1.5 0v-7.5a.75.75 0 0 1 .75-.75Zm-7.52 9.47a2.25 2.25 0 0 0 2.24 2.03h6.06c1.16 0 2.13-.88 2.24-2.03L18.42 6.5H5.58l1.150 11.97Z"/></svg>
<div class="t" style="left:1562.40px;top:651.22px;font-size:19.0px;color:#d6d6d6;font-weight:400;">Resend invitation</div>
<div class="t" style="left:1562.20px;top:699.21px;font-size:18.3px;color:#e05252;font-weight:400;">Remove</div>
</body></html>
